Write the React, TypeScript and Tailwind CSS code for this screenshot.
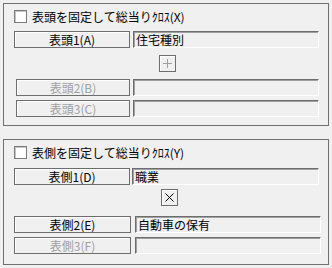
import React from "react"

const font = { fontFamily: '"Noto Sans CJK JP", "Noto Sans", sans-serif' }

function Check({ label }: { label: string }) {
  return (
    <div className="flex h-[13px] items-center gap-[5px]">
      <div className="h-[13px] w-[13px] border border-[#7a7a7a] bg-white shadow-[inset_1px_1px_0_#c8c8c8]" />
      <span className="text-[12px] leading-[13px] text-black">{label}</span>
    </div>
  )
}

function Btn({ label, w, disabled }: { label: string; w: string; disabled?: boolean }) {
  return (
    <div
      className={`flex h-[17px] shrink-0 items-center justify-center border border-[#6d6d6d] bg-[#f0f0f0] text-[12px] leading-[13px] shadow-[inset_1px_1px_0_#ffffff] ${w} ${
        disabled ? "text-[#a0a0a0]" : "text-black"
      }`}
    >
      {label}
    </div>
  )
}

function Field({ value, w }: { value?: string; w: string }) {
  return (
    <div
      className={`flex h-[17px] shrink-0 items-center border-t border-l border-t-[#6d6d6d] border-l-[#6d6d6d] border-r border-b border-r-white border-b-white bg-[#f0f0f0] pl-[2px] text-[12px] leading-[13px] text-black shadow-[inset_1px_1px_0_#a0a0a0] ${w}`}
    >
      {value}
    </div>
  )
}

function Small({ children, dim }: { children: React.ReactNode; dim?: boolean }) {
  return (
    <div
      className={`flex h-[17px] w-[17px] items-center justify-center border border-[#6d6d6d] bg-[#f0f0f0] shadow-[inset_1px_1px_0_#ffffff] ${
        dim ? "text-[#a0a0a0]" : "text-black"
      }`}
    >
      {children}
    </div>
  )
}

export default function App() {
  return (
    <div className="h-[268px] w-[332px] overflow-hidden bg-[#f0f0f0] pt-[3px]" style={font}>
      {/* 列側 */}
      <div className="ml-[3px] flex h-[123px] w-[326px] flex-col border border-[#707070] pl-[10px] pt-[6px]">
        <Check label="表頭を固定して総当りｸﾛｽ(X)" />
        <div className="mt-[8px] flex gap-[3px]">
          <Btn label="表頭1(A)" w="w-[116px]" />
          <Field value="住宅種別" w="w-[186px]" />
        </div>
        <div className="ml-[145px] mt-[7px]">
          <Small dim>
            <svg width="9" height="9" viewBox="0 0 9 9">
              <path d="M4.5 0v9M0 4.5h9" stroke="#a0a0a0" strokeWidth="1" />
            </svg>
          </Small>
        </div>
        <div className="ml-[2px] mt-[7px] flex gap-[3px]">
          <Btn label="表頭2(B)" w="w-[114px]" disabled />
          <Field w="w-[186px]" />
        </div>
        <div className="ml-[2px] mt-[4px] flex gap-[3px]">
          <Btn label="表頭3(C)" w="w-[114px]" disabled />
          <Field w="w-[186px]" />
        </div>
      </div>

      {/* 行側 */}
      <div className="ml-[3px] mt-[13px] flex h-[126px] w-[326px] flex-col border border-[#707070] pl-[10px] pt-[6px]">
        <Check label="表側を固定して総当りｸﾛｽ(Y)" />
        <div className="mt-[9px] flex gap-[2px]">
          <Btn label="表側1(D)" w="w-[116px]" />
          <Field value="職業" w="w-[187px]" />
        </div>
        <div className="ml-[147px] mt-[4px]">
          <Small>
            <svg width="9" height="9" viewBox="0 0 9 9">
              <path d="M0.5 0.5l8 8M8.5 0.5l-8 8" stroke="#000" strokeWidth="1" />
            </svg>
          </Small>
        </div>
        <div className="mt-[10px] flex gap-[4px]">
          <Btn label="表側2(E)" w="w-[117px]" />
          <Field value="自動車の保有" w="w-[186px]" />
        </div>
        <div className="mt-[4px] flex gap-[4px]">
          <Btn label="表側3(F)" w="w-[117px]" disabled />
          <Field w="w-[186px]" />
        </div>
      </div>
    </div>
  )
}
